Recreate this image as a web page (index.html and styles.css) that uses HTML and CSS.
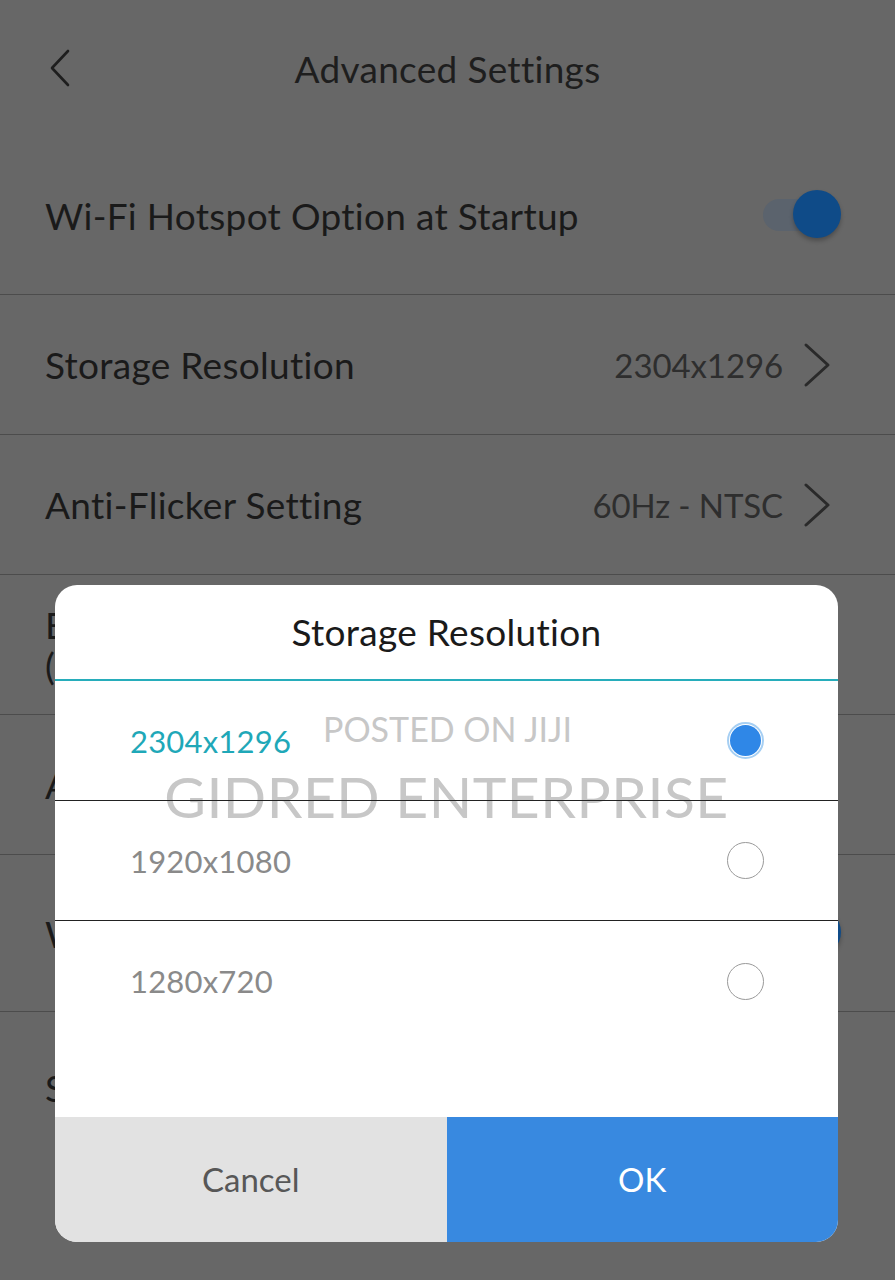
FILE: index.html
```html
<!DOCTYPE html>
<html lang="en">
<head>
<meta charset="utf-8">
<title>Advanced Settings</title>
<link rel="stylesheet" href="styles.css">
</head>
<body>
<div class="screen">
  <header class="topbar">
    <svg class="back" width="30" height="40" viewBox="0 0 30 40"><path d="M22 3 L6 20 L22 37" fill="none" stroke="#1e1e1e" stroke-width="2.6" stroke-linecap="round" stroke-linejoin="round"/></svg>
    <h1 class="title">Advanced Settings</h1>
  </header>

  <ul class="list">
    <li class="row row-first">
      <span class="label">Wi-Fi Hotspot Option at Startup</span>
      <span class="toggle"><span class="track"></span><span class="knob"></span></span>
    </li>
    <li class="row">
      <span class="label">Storage Resolution</span>
      <span class="value">2304x1296</span>
      <svg class="chev" width="28" height="46" viewBox="0 0 28 46"><path d="M3 3 L25 23 L3 43" fill="none" stroke="#2a2a2a" stroke-width="3" stroke-linecap="round" stroke-linejoin="round"/></svg>
    </li>
    <li class="row">
      <span class="label">Anti-Flicker Setting</span>
      <span class="value">60Hz - NTSC</span>
      <svg class="chev" width="28" height="46" viewBox="0 0 28 46"><path d="M3 3 L25 23 L3 43" fill="none" stroke="#2a2a2a" stroke-width="3" stroke-linecap="round" stroke-linejoin="round"/></svg>
    </li>
    <li class="row">
      <span class="label two">Event Recording<br>(G-Sensor)</span>
    </li>
    <li class="row">
      <span class="label">Audio Recording</span>
    </li>
    <li class="row row-tall">
      <span class="label">Watermark</span>
      <span class="toggle"><span class="track"></span><span class="knob"></span></span>
    </li>
    <li class="row row-last">
      <span class="label">SD Card</span>
    </li>
  </ul>

  <div class="dialog">
    <div class="dlg-title">Storage Resolution</div>
    <div class="dlg-body">
      <div class="watermark">
        <span class="wm-small">POSTED ON JIJI</span>
        <span class="wm-big">GIDRED ENTERPRISE</span>
      </div>
      <div class="opt selected">
        <span class="opt-label">2304x1296</span>
        <span class="radio"><span class="dot"></span></span>
      </div>
      <div class="opt">
        <span class="opt-label">1920x1080</span>
        <span class="radio"></span>
      </div>
      <div class="opt opt-last">
        <span class="opt-label">1280x720</span>
        <span class="radio"></span>
      </div>
    </div>
    <div class="dlg-buttons">
      <div class="btn cancel">Cancel</div>
      <div class="btn ok">OK</div>
    </div>
  </div>
</div>
</body>
</html>
```

FILE: styles.css
```css
* { box-sizing: border-box; }
html, body { margin: 0; padding: 0; }
body {
  background: #676767;
  font-family: "Lato", "Noto Sans", sans-serif;
  color: #1b1b1b;
}
.screen {
  position: relative;
  width: 895px;
  height: 1280px;
  overflow: hidden;
  background: #676767;
}
.topbar {
  height: 140px;
  display: flex;
  align-items: center;
  justify-content: center;
  position: relative;
  padding-bottom: 2px;
}
.back {
  position: absolute;
  left: 46px;
  top: 48px;
}
.title {
  margin: 0;
  font-weight: 400;
  font-size: 37px;
  color: #1e1e1e;
  letter-spacing: 0.3px;
  padding-bottom: 2px;
}
.list { list-style: none; margin: 0; padding: 0; }
.row {
  height: 140px;
  display: flex;
  align-items: center;
  padding: 0 64px 0 45px;
  border-bottom: 1px solid #4c4c4c;
}
.row-first { height: 155px; padding-right: 54px; padding-bottom: 4px; }
.row-tall { height: 157px; padding-right: 54px; }
.row-last { height: 150px; border-bottom: none; }
.label {
  flex: 1;
  font-size: 37px;
  color: #1a1a1a;
  letter-spacing: 0.3px;
}
.label.two { line-height: 41px; }
.value {
  font-size: 33px;
  color: #2e2e2e;
  margin-right: 20px;
  letter-spacing: -0.1px;
}
.toggle {
  position: relative;
  width: 80px;
  height: 52px;
}
.track {
  position: absolute;
  left: 2px;
  top: 10px;
  width: 60px;
  height: 32px;
  border-radius: 16px;
  background: #5b636d;
}
.knob {
  position: absolute;
  right: 0;
  top: 1px;
  width: 48px;
  height: 48px;
  border-radius: 50%;
  background: #0f4b88;
  box-shadow: 0 3px 4px rgba(0,0,0,0.25);
}

/* dialog */
.dialog {
  position: absolute;
  left: 55px;
  top: 585px;
  width: 783px;
  height: 657px;
  background: #fff;
  border-radius: 22px;
  overflow: hidden;
  display: flex;
  flex-direction: column;
  z-index: 1;
}
.dlg-title {
  height: 96px;
  display: flex;
  align-items: center;
  justify-content: center;
  font-size: 37px;
  color: #1a1a1a;
  border-bottom: 2px solid #27adbb;
  padding-bottom: 2px;
  letter-spacing: 0.3px;
}
.dlg-body {
  position: relative;
  flex: 1;
  z-index: 0;
}
.watermark {
  position: absolute;
  left: 0;
  right: 0;
  top: 28px;
  display: flex;
  flex-direction: column;
  align-items: center;
  color: #c7c7c7;
  z-index: -1;
  pointer-events: none;
}
.wm-small { font-size: 34px; line-height: 40px; padding-left: 2px; }
.wm-big { font-size: 57px; line-height: 66px; margin-top: 14px; letter-spacing: 0.5px; }
.opt {
  height: 120px;
  display: flex;
  align-items: center;
  padding: 0 74px 0 75px;
  border-bottom: 1px solid #222;
}
.opt:first-of-type { height: 119px; }
.opt-last { border-bottom: none; }
.opt-label {
  flex: 1;
  font-size: 31px;
  color: #8a8a8a;
  letter-spacing: 0.2px;
}
.selected .opt-label { color: #1fa8b8; }
.radio {
  width: 37px;
  height: 37px;
  border-radius: 50%;
  border: 1.5px solid #9a9a9a;
  display: flex;
  align-items: center;
  justify-content: center;
}
.selected .radio { border: 2px solid #a6cff3; padding: 1px; }
.dot {
  width: 100%;
  height: 100%;
  border-radius: 50%;
  background: #2f87e7;
}
.dlg-buttons {
  height: 125px;
  display: flex;
}
.btn {
  flex: 1;
  display: flex;
  align-items: center;
  justify-content: center;
  font-size: 33px;
  padding-bottom: 2px;
}
.cancel { background: #e2e2e2; color: #575757; }
.ok { background: #3889e0; color: #fff; }
```
